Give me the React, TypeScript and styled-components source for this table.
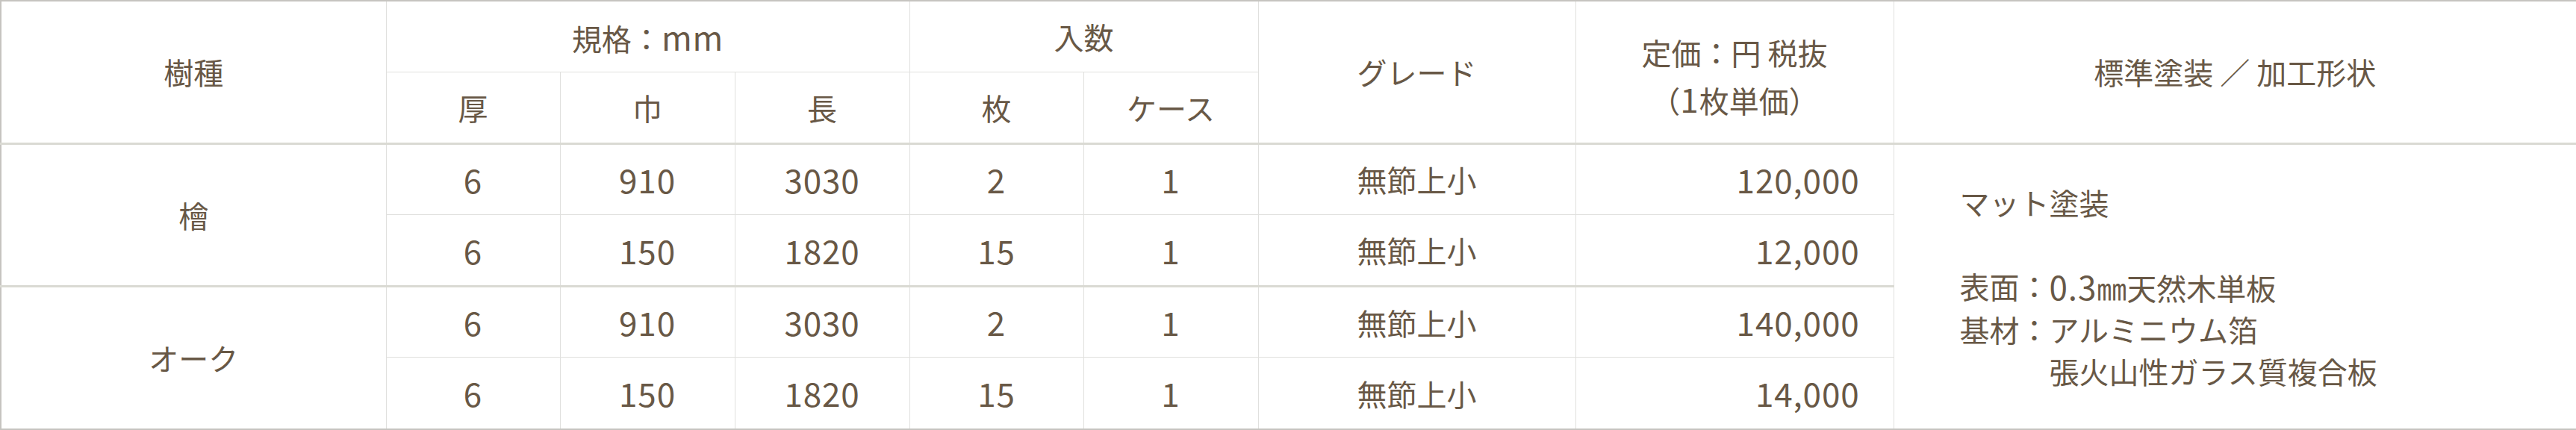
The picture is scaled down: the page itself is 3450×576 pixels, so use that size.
import styled, { createGlobalStyle } from "styled-components";

const GlobalStyle = createGlobalStyle`
  html, body {
    margin: 0;
    padding: 0;
    background: #ffffff;
  }
`;

const TEXT = "#685846";
const THIN = "#e0e0de";
const GROUP = "#dadad3";

const colWidths = [516, 233, 234, 234, 233, 234, 425, 426, 915];

type Row = {
  thick: string;
  width: string;
  length: string;
  sheets: string;
  cases: string;
  grade: string;
  price: string;
};

const species: { name: string; rows: Row[] }[] = [
  {
    name: "檜",
    rows: [
      { thick: "6", width: "910", length: "3030", sheets: "2", cases: "1", grade: "無節上小", price: "120,000" },
      { thick: "6", width: "150", length: "1820", sheets: "15", cases: "1", grade: "無節上小", price: "12,000" },
    ],
  },
  {
    name: "オーク",
    rows: [
      { thick: "6", width: "910", length: "3030", sheets: "2", cases: "1", grade: "無節上小", price: "140,000" },
      { thick: "6", width: "150", length: "1820", sheets: "15", cases: "1", grade: "無節上小", price: "14,000" },
    ],
  },
];

export default function App() {
  return (
    <>
      <GlobalStyle />
      <Table>
        <colgroup>
          {colWidths.map((w, i) => (
            <col key={i} style={{ width: w }} />
          ))}
        </colgroup>
        <thead>
          <Tr>
            <Th rowSpan={2}>樹種</Th>
            <Th colSpan={3}>
              規格：<Num>mm</Num>
            </Th>
            <Th colSpan={2}>入数</Th>
            <Th rowSpan={2}>グレード</Th>
            <Th rowSpan={2}>
              <PriceHead>
                定価：円 税抜
                <br />
                （<Num>1</Num>枚単価）
              </PriceHead>
            </Th>
            <Th rowSpan={2}>標準塗装 ／ 加工形状</Th>
          </Tr>
          <Tr>
            <Th>厚</Th>
            <Th>巾</Th>
            <Th>長</Th>
            <Th>枚</Th>
            <Th>ケース</Th>
          </Tr>
        </thead>
        <tbody>
          {species.map((s, si) =>
            s.rows.map((r, ri) => (
              <Tr key={`${si}-${ri}`} $group={ri === 0}>
                {ri === 0 && <Td rowSpan={s.rows.length}>{s.name}</Td>}
                <Td><Num>{r.thick}</Num></Td>
                <Td><Num>{r.width}</Num></Td>
                <Td><Num>{r.length}</Num></Td>
                <Td><Num>{r.sheets}</Num></Td>
                <Td><Num>{r.cases}</Num></Td>
                <Td>{r.grade}</Td>
                <Td $align="right"><Num>{r.price}</Num></Td>
                {si === 0 && ri === 0 && (
                  <Td rowSpan={4} $align="left">
                    <Notes>
                      <NoteLine>マット塗装</NoteLine>
                      <Spacer />
                      <Spec>
                        <span>表面：</span>
                        <span>
                          <Num>0.3</Num>㎜天然木単板
                        </span>
                        <span>基材：</span>
                        <span>
                          アルミニウム箔
                          <br />
                          張火山性ガラス質複合板
                        </span>
                      </Spec>
                    </Notes>
                  </Td>
                )}
              </Tr>
            ))
          )}
        </tbody>
      </Table>
    </>
  );
}

const Table = styled.table`
  width: 3450px;
  table-layout: fixed;
  border-collapse: collapse;
  border: 2px solid #c6c4c0;
  font-family: "Noto Sans CJK JP", "Noto Sans", sans-serif;
  font-size: 40px;
  color: ${TEXT};
`;

const Tr = styled.tr<{ $group?: boolean }>`
  height: 95.6px;

  & > td {
    border-top: ${(p) => (p.$group ? `3px solid ${GROUP}` : `1px solid ${THIN}`)};
  }
`;

const Th = styled.th`
  font-weight: 400;
  text-align: center;
  vertical-align: middle;
  border: 1px solid ${THIN};
  padding: 0;
  line-height: 1.2;
`;

const PriceHead = styled.div`
  line-height: 62px;
  padding-top: 12px;
`;

const Td = styled.td<{ $align?: "left" | "right" | "center" }>`
  text-align: ${(p) => p.$align ?? "center"};
  vertical-align: middle;
  border-left: 1px solid ${THIN};
  border-right: 1px solid ${THIN};
  border-bottom: 1px solid ${THIN};
  padding: ${(p) =>
    p.$align === "right" ? "0 45px 0 0" : p.$align === "left" ? "0 0 0 88px" : "0"};
  line-height: 1.2;
`;

const Num = styled.span`
  font-size: 44px;
  letter-spacing: 0.02em;
`;

const Notes = styled.div`
  display: flex;
  flex-direction: column;
  line-height: 56px;
`;

const NoteLine = styled.div``;

const Spacer = styled.div`
  height: 56px;
`;

const Spec = styled.div`
  display: grid;
  grid-template-columns: max-content max-content;
  white-space: nowrap;
`;
